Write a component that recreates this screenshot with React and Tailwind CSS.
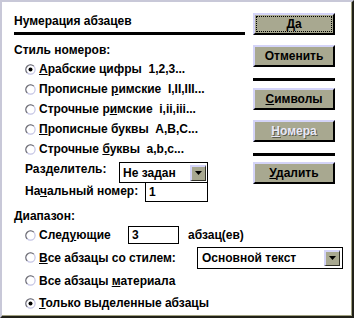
import React from "react";

function Radio({ on }) {
  return (
    <svg width="11" height="11" viewBox="0 0 11 11" className="shrink-0">
      <circle cx="5.5" cy="5.5" r="4.6" fill="#fff" stroke="#c4c4e4" strokeWidth="1.2" />
      <path d="M2.2 8.8 A4.6 4.6 0 0 1 8.8 2.2" fill="none" stroke="#707070" strokeWidth="1.2" />
      {on && <circle cx="5.5" cy="5.5" r="2" fill="#000" />}
    </svg>
  );
}

function Arrow() {
  return (
    <div className="w-[16px] h-[16px] shrink-0 bg-[#a8a890] border-t-2 border-l-2 border-[#d4d4f8] border-r border-b border-r-[#303028] border-b-[#303028] flex items-center justify-center">
      <svg width="7" height="4" viewBox="0 0 7 4">
        <path d="M0 0 H7 L3.5 4 Z" fill="#000" />
      </svg>
    </div>
  );
}

function Option({ on, children }) {
  return (
    <div className="h-5 flex items-center pl-[11px]">
      <Radio on={on} />
      <span className="ml-[3px] leading-4">{children}</span>
    </div>
  );
}

function Btn({ children, focus, disabled, className = "" }) {
  return (
    <div
      className={
        "h-[22px] w-[82px] flex bg-[#a8a890] border-t-2 border-l-2 border-[#d4d4f8] border-r-2 border-b-2 border-r-black border-b-black " +
        className
      }
    >
      {focus ? (
        <div className="flex-1 m-[1px] border border-dotted border-black flex items-center justify-center leading-4">
          {children}
        </div>
      ) : (
        <div
          className={
            "flex-1 flex items-center justify-center leading-4 " +
            (disabled ? "text-[#e8e8f8] [text-shadow:1px_1px_0_#5c5c4c]" : "")
          }
        >
          {children}
        </div>
      )}
    </div>
  );
}

export default function App() {
  return (
    <div className="w-[356px] h-[320px] bg-white font-['Liberation_Sans',Arial,sans-serif] font-bold text-[12px] text-black">
      <div className="w-[354px] h-[318px] border-t-2 border-l-2 border-[#c8c8d8] border-r-2 border-b-2 border-r-[#202018] border-b-[#202018] shadow-[inset_-1px_-1px_0_#a0a080] pt-[11px] pl-[12px]">
        <div className="flex">
          {/* left column */}
          <div className="w-[239px]">
            <div className="leading-4 h-4">Нумерация абзацев</div>
            <div className="mt-[3px] h-[3px] w-[231px] bg-black" />
            <div className="mt-[7px] leading-4">Стиль номеров:</div>
            <div className="mt-[1px]">
              <Option on>
                <u>А</u>рабские цифры&nbsp; 1,2,3...
              </Option>
              <Option>
                Прописные <u>р</u>имские&nbsp; I,II,III...
              </Option>
              <Option>
                Строчные р<u>и</u>мские&nbsp; i,ii,iii...
              </Option>
              <Option>
                <u>П</u>рописные буквы&nbsp; A,B,C...
              </Option>
              <Option>
                Строчные <u>б</u>уквы&nbsp; a,b,c...
              </Option>
            </div>
            <div className="mt-[2px] flex items-start pl-[11px] h-[22px]">
              <span className="w-[94px] leading-4">
                Раз<u>д</u>елитель:
              </span>
              <div className="mt-[1px] w-[89px] h-[21px] border border-black flex items-center pl-[3px] pr-[1px]">
                <span className="flex-1 leading-4">Не задан</span>
                <Arrow />
              </div>
            </div>
            <div className="flex items-start pl-[11px] h-[19px]">
              <span className="w-[120px] leading-4">
                На<u>ч</u>альный номер:
              </span>
              <div className="w-[63px] h-[19px] border border-black border-t-0 flex items-center pl-[3px] leading-4">
                1
              </div>
            </div>
          </div>
          {/* buttons */}
          <div className="flex flex-col">
            <Btn focus>Да</Btn>
            <Btn className="mt-[10px]">Отменить</Btn>
            <div className="mt-[11px] h-[3px] w-[82px] bg-black" />
            <Btn className="mt-[7px]">
              <span>
                <u>С</u>имволы
              </span>
            </Btn>
            <Btn className="mt-[10px]" disabled>
              <span>
                <u>Н</u>омера
              </span>
            </Btn>
            <div className="mt-[11px] h-[3px] w-[82px] bg-black" />
            <Btn className="mt-[6px]">
              <span>
                <u>У</u>далить
              </span>
            </Btn>
          </div>
        </div>

        <div className="mt-[6px] leading-4">Диапазон:</div>
        <div className="h-[22px] flex items-center pl-[11px]">
          <Radio />
          <span className="ml-[3px] w-[89px] leading-4">
            След<u>у</u>ющие
          </span>
          <div className="w-[51px] h-[18px] border border-black flex items-center pl-[3px] leading-4">
            3
          </div>
          <span className="ml-[9px] leading-4">абзац(ев)</span>
        </div>
        <div className="h-[23px] flex items-center pl-[11px]">
          <Radio />
          <span className="ml-[3px] w-[158px] leading-4">
            <u>В</u>се абзацы со стилем:
          </span>
          <div className="w-[146px] h-[22px] border border-black flex items-center pl-[4px] pr-[2px]">
            <span className="flex-1 leading-4">Основной текст</span>
            <Arrow />
          </div>
        </div>
        <div className="h-[23px] flex items-center pl-[11px]">
          <Radio />
          <span className="ml-[3px] leading-4">
            Все абзацы <u>м</u>атериала
          </span>
        </div>
        <div className="h-[22px] flex items-center pl-[11px]">
          <Radio on />
          <span className="ml-[3px] leading-4">
            <u>Т</u>олько выделенные абзацы
          </span>
        </div>
      </div>
    </div>
  );
}
